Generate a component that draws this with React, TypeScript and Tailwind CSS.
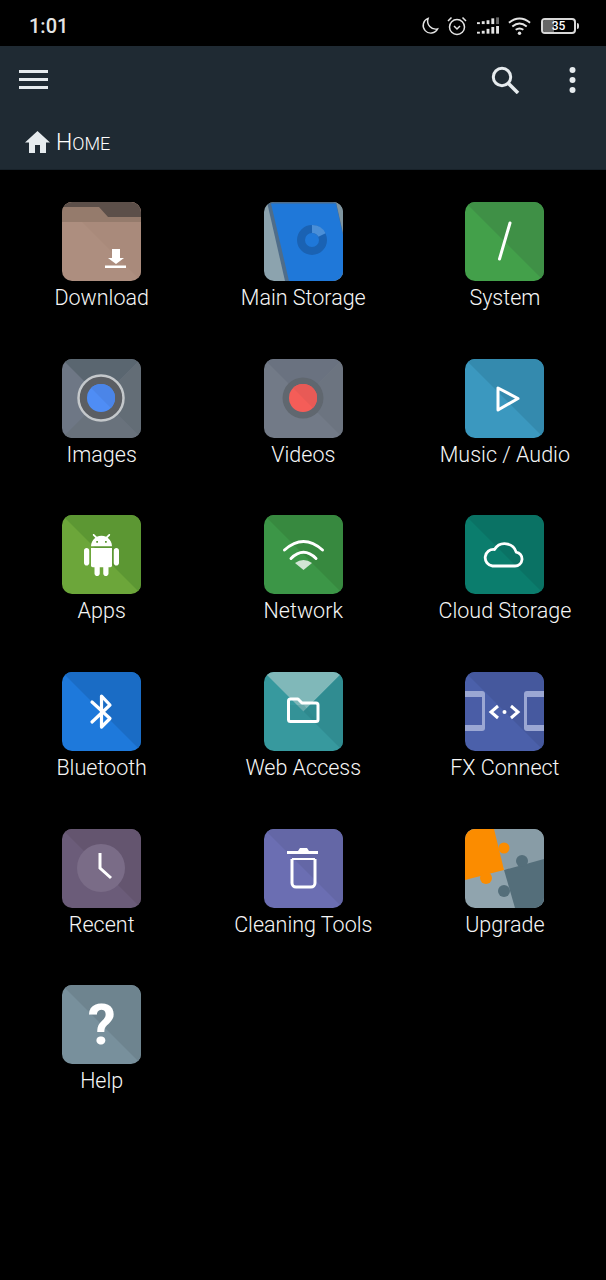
import type { ReactNode } from 'react'

const FONT = "font-['Roboto','Liberation_Sans',sans-serif]"

// tile with the two-tone diagonal; art is drawn on a 79x79 canvas
function Tile({ base, shade, children }: { base: string; shade?: string; children?: ReactNode }) {
  return (
    <svg viewBox="0 0 79 79" className="block w-[79px] h-[79px] rounded-[10px]">
      <rect width="79" height="79" fill={base} />
      {shade && <polygon points="0,0 79,0 79,79" fill={shade} />}
      {children}
    </svg>
  )
}

const QUAD = {
  top: '0,0 79,0 39.5,39.5',
  bottom: '0,79 79,79 39.5,39.5',
  left: '0,0 0,79 39.5,39.5',
  right: '79,0 79,79 39.5,39.5',
}

const DownloadIcon = () => (
  <Tile base="#ad8e7f" shade="#a98a7b">
    <rect width="79" height="15" fill="#5c4f49" />
    <polygon points="0,5 37,5 46,15 79,15 79,20 0,20" fill="#957b6c" />
    <polygon points="50,56 50,47 58,47 58,56 62,56 54,62 46,56" fill="#fff" />
    <rect x="43" y="63.5" width="21" height="2.5" fill="#fff" />
  </Tile>
)

const StorageIcon = () => (
  <Tile base="#8ca3ae">
    <polygon points="40,0 79,0 79,79 50,79" fill="#7f95a0" />
    <polygon points="3,0 72,0 79,31 79,79 21,79" fill="#4f6d8a" />
    <polygon points="7,1.500 72,1.500 79,33 79,79 25,79" fill="#1f78d9" />
    <circle cx="48" cy="38" r="11" fill="none" stroke="#1a62b3" strokeWidth="8" />
    <path d="M48 27a11 11 0 0 1 10 6" fill="none" stroke="#4a8fd8" strokeWidth="8" />
  </Tile>
)

const SystemIcon = () => (
  <Tile base="#43a04a" shade="#3f9046">
    <path d="M45 21L34.500 57" stroke="#fff" strokeWidth="3" strokeLinecap="round" />
  </Tile>
)

const ImagesIcon = () => (
  <Tile base="#6e7785">
    <polygon points={QUAD.top} fill="#5a6670" />
    <polygon points={QUAD.right} fill="#636d76" />
    <polygon points={QUAD.bottom} fill="#69727c" />
    <circle cx="39" cy="39" r="22.500" fill="#5b5e63" stroke="#c4c8cb" strokeWidth="2.500" />
    <circle cx="39" cy="39" r="14" fill="#4f8df5" />
    <path d="M29.100 29.100A14 14 0 0 1 48.900 48.900Z" fill="#4b85e8" />
  </Tile>
)

const VideosIcon = () => (
  <Tile base="#727a87">
    <polygon points={QUAD.top} fill="#6a7280" />
    <polygon points={QUAD.right} fill="#6c7480" />
    <circle cx="39" cy="39" r="20.500" fill="#60676f" />
    <circle cx="39" cy="39" r="14" fill="#f45d58" />
    <path d="M29.100 29.100A14 14 0 0 1 48.900 48.900Z" fill="#e85a56" />
  </Tile>
)

const MusicIcon = () => (
  <Tile base="#3b98bf" shade="#348aae">
    <polygon points="33,29 33,51 53,39.500" fill="none" stroke="#fff" strokeWidth="3" strokeLinejoin="round" />
  </Tile>
)

const AppsIcon = () => (
  <Tile base="#6ca63a" shade="#5c9733">
    <g transform="translate(18.500 19) scale(1.75)">
      <path
        fill="#fff"
        d="M6 18c0 .55.45 1 1 1h1v3.500c0 .83.67 1.500 1.500 1.500s1.500-.67 1.500-1.500V19h2v3.500c0 .83.67 1.500 1.500 1.500s1.500-.67 1.500-1.500V19h1c.55 0 1-.45 1-1V8H6v10zM3.500 8C2.670 8 2 8.670 2 9.500v7c0 .83.67 1.500 1.500 1.500S5 17.330 5 16.500v-7C5 8.670 4.330 8 3.500 8zm17 0c-.83 0-1.500.67-1.500 1.500v7c0 .83.67 1.500 1.500 1.500s1.500-.67 1.500-1.500v-7c0-.83-.67-1.500-1.500-1.500zm-4.970-5.840l1.300-1.300c.2-.2.2-.51 0-.71-.2-.2-.51-.2-.71 0l-1.480 1.480C13.850 1.230 12.950 1 12 1c-.96 0-1.860.23-2.660.63L7.850.15c-.2-.2-.51-.2-.71 0-.2.2-.2.51 0 .71l1.310 1.310C6.970 3.260 6 5.010 6 7h12c0-1.990-.97-3.750-2.470-4.840zM10 5H9V4h1v1zm5 0h-1V4h1v1z"
      />
    </g>
  </Tile>
)

const NetworkIcon = () => (
  <Tile base="#3c9647" shade="#37893f">
    <path d="M20.500 35Q39.500 18 58.500 35" fill="none" stroke="#fff" strokeWidth="3" strokeLinecap="round" />
    <path d="M27 43.500Q39.500 31 52 43.500" fill="none" stroke="#fff" strokeWidth="3" strokeLinecap="round" />
    <path d="M31 48Q39.500 42 48 48L39.500 55Z" fill="#d3e5d5" />
  </Tile>
)

const CloudIcon = () => (
  <Tile base="#0b7d6d" shade="#0a7264">
    <path
      d="M27.500 51H50a7 7 0 0 0 1.200-13.900A12 12 0 0 0 29.500 34.500 8.300 8.300 0 0 0 27.500 51Z"
      fill="none"
      stroke="#fff"
      strokeWidth="2.800"
      strokeLinejoin="round"
    />
  </Tile>
)

const BluetoothIcon = () => (
  <Tile base="#1e79db" shade="#1a6cc5">
    <path
      d="M30 30L48 46.500L39.500 55V24L48 33L30 50"
      fill="none"
      stroke="#fff"
      strokeWidth="3.200"
      strokeLinejoin="round"
      strokeLinecap="round"
    />
  </Tile>
)

const WebIcon = () => (
  <Tile base="#37999e">
    <polygon points={QUAD.top} fill="#80b8b9" />
    <polygon points={QUAD.right} fill="#308c91" />
    <polygon points="26,33 40,33 52,48 26,48" fill="#2f8388" opacity="0.3" />
    <path
      d="M24.500 47.500V29a2 2 0 0 1 2-2H34l4 4H52a2 2 0 0 1 2 2V47.500a2 2 0 0 1-2 2H26.500a2 2 0 0 1-2-2Z"
      fill="none"
      stroke="#fff"
      strokeWidth="3"
      strokeLinejoin="round"
    />
  </Tile>
)

const ConnectIcon = () => (
  <Tile base="#4b60aa" shade="#45589d">
    <path d="M0 19H17A3 3 0 0 1 20 22V56A3 3 0 0 1 17 59H0Z" fill="#9ba7d3" />
    <rect x="0" y="25" width="17" height="28" fill="#4a5da6" />
    <path d="M79 19H62A3 3 0 0 0 59 22V56A3 3 0 0 0 62 59H79Z" fill="#9ba7d3" />
    <rect x="62" y="25" width="17" height="28" fill="#46599f" />
    <path d="M33 34L26 40L33 46M46 34L53 40L46 46" fill="none" stroke="#fff" strokeWidth="3" />
    <circle cx="39.500" cy="40" r="2" fill="#fff" />
  </Tile>
)

const RecentIcon = () => (
  <Tile base="#6b5c79" shade="#64556f">
    <circle cx="39" cy="39" r="24" fill="#7a6c87" />
    <path d="M38 24V39L49 49" fill="none" stroke="#fff" strokeWidth="3" />
  </Tile>
)

const TrashIcon = () => (
  <Tile base="#6b6eb2" shade="#6467a6">
    <path d="M23 23.500H54" stroke="#fff" strokeWidth="3" />
    <path d="M34 22L36 19H43L45 22Z" fill="#fff" />
    <path d="M28 30V54A4 4 0 0 0 32 58H47A4 4 0 0 0 51 54V30" fill="none" stroke="#fff" strokeWidth="3" />
    <path d="M28 30H51" stroke="#fff" strokeWidth="2" />
  </Tile>
)

const UpgradeIcon = () => (
  <Tile base="#90a4ae" shade="#889ca6">
    <polygon points="39,41 79,30 79,79 50,79" fill="#546e7a" />
    <circle cx="57" cy="32" r="6" fill="#546e7a" />
    <circle cx="39" cy="62" r="6" fill="#546e7a" />
    <polygon points="0,0 29,0 39,41 0,51" fill="#fb8c00" />
    <circle cx="39" cy="19" r="5.500" fill="#fb8c00" />
    <circle cx="21" cy="49" r="6" fill="#fb8c00" />
  </Tile>
)

const HelpIcon = () => (
  <div className="relative">
    <Tile base="#78909c" shade="#6e848f" />
    <span className="absolute inset-0 flex items-center justify-center text-[56px] leading-none font-bold text-white">?</span>
  </div>
)

const ITEMS: { label: string; icon: ReactNode }[] = [
  { label: 'Download', icon: <DownloadIcon /> },
  { label: 'Main Storage', icon: <StorageIcon /> },
  { label: 'System', icon: <SystemIcon /> },
  { label: 'Images', icon: <ImagesIcon /> },
  { label: 'Videos', icon: <VideosIcon /> },
  { label: 'Music / Audio', icon: <MusicIcon /> },
  { label: 'Apps', icon: <AppsIcon /> },
  { label: 'Network', icon: <NetworkIcon /> },
  { label: 'Cloud Storage', icon: <CloudIcon /> },
  { label: 'Bluetooth', icon: <BluetoothIcon /> },
  { label: 'Web Access', icon: <WebIcon /> },
  { label: 'FX Connect', icon: <ConnectIcon /> },
  { label: 'Recent', icon: <RecentIcon /> },
  { label: 'Cleaning Tools', icon: <TrashIcon /> },
  { label: 'Upgrade', icon: <UpgradeIcon /> },
  { label: 'Help', icon: <HelpIcon /> },
]

function StatusBar() {
  return (
    <div className="h-[46px] flex items-center justify-between pl-[29px] pr-[27px] pt-[5px] bg-black text-[#e4e4e4]">
      <span className="text-[20px] font-medium leading-none">1:01</span>
      <div className="flex items-center">
        <svg width="18" height="18" viewBox="0 0 19 19" fill="none" stroke="currentColor" strokeWidth="1.500">
          <path d="M7.500 1.500A8 8 0 1 0 17.500 12.500 8.500 8.500 0 0 1 7.500 1.500Z" />
        </svg>
        <svg width="20" height="20" viewBox="0 0 20 20" fill="none" stroke="currentColor" strokeWidth="1.500" className="ml-[8px]">
          <circle cx="10" cy="11" r="7.500" />
          <path d="M1 5L4.500 1.500M19 5L15.500 1.500M7 10L10 13L13 10" />
        </svg>
        <svg width="22" height="18" viewBox="0 0 23 18" fill="currentColor" className="ml-[10px]">
          <rect x="0" y="5" width="3" height="2" />
          <rect x="5" y="4" width="3" height="3" />
          <rect x="10" y="3" width="3" height="4" />
          <rect x="15" y="1" width="3" height="6" />
          <rect x="20" y="0" width="3" height="7" opacity="0.45" />
          <rect x="0" y="15" width="3" height="2" />
          <rect x="5" y="14" width="3" height="3" />
          <rect x="10" y="12" width="3" height="5" />
          <rect x="15" y="10" width="3" height="7" />
          <rect x="20" y="9" width="3" height="8" />
        </svg>
        <svg width="24" height="20" viewBox="0 0 25 20" fill="none" stroke="currentColor" strokeWidth="2" className="ml-[9px]">
          <path d="M1 6.500Q12 -2 23 6.500M4.500 10.500Q12 4.500 19.500 10.500M8 14Q12 11 16 14" />
          <circle cx="12" cy="17.500" r="1.800" fill="currentColor" stroke="none" />
        </svg>
        <div className="ml-[9px] flex items-center">
          <div className="relative w-[35px] h-[16px] rounded-[4px] border-2 border-[#d8d8d8] overflow-hidden flex items-center justify-center">
            <div className="absolute left-0 top-0 bottom-0 w-[11px] bg-[#666]" />
            <span className="relative text-[12px] leading-none font-medium text-white">35</span>
          </div>
          <div className="w-[2px] h-[6px] ml-[1px] bg-[#d8d8d8] rounded-r-sm" />
        </div>
      </div>
    </div>
  )
}

function Toolbar() {
  return (
    <div className="bg-[#1f2a33] border-b border-[#18222a] h-[124px] text-[#e6ebee]">
      <div className="h-[67px] flex items-center pl-[19px] pr-[30px]">
        <svg width="29" height="19" viewBox="0 0 29 19" fill="currentColor">
          <rect width="29" height="3" />
          <rect y="8" width="29" height="3" />
          <rect y="16" width="29" height="3" />
        </svg>
        <svg width="29" height="28" viewBox="0 0 29 28" fill="none" stroke="currentColor" className="ml-auto">
          <circle cx="11" cy="11" r="8.700" strokeWidth="3" />
          <path d="M17.500 17.500L27 27" strokeWidth="3.500" />
        </svg>
        <svg width="7" height="26" viewBox="0 0 7 26" fill="currentColor" className="ml-[49px]">
          <circle cx="3.500" cy="3" r="3" />
          <circle cx="3.500" cy="13" r="3" />
          <circle cx="3.500" cy="23" r="3" />
        </svg>
      </div>
      <div className="h-[56px] flex items-center pl-[25px] pt-[2px]">
        <svg width="25" height="22" viewBox="0 0 25 22" fill="currentColor">
          <path d="M12.500 0L25 11.500H21V22H15V14H10V22H4V11.500H0Z" />
        </svg>
        <span className="ml-[6px] font-light leading-none text-white">
          <span className="text-[23px]">H</span>
          <span className="text-[18px]">OME</span>
        </span>
      </div>
    </div>
  )
}

export default function App() {
  return (
    <div className={`${FONT} w-[606px] h-[1280px] bg-black overflow-hidden`}>
      <StatusBar />
      <Toolbar />
      <div className="grid grid-cols-[repeat(3,201.6px)] auto-rows-[156.670px] pt-[32px] pl-[0.9px]">
        {ITEMS.map((item) => (
          <div key={item.label} className="flex flex-col items-center">
            {item.icon}
            <span className="mt-[3px] text-[21.500px] leading-[28px] font-light text-[#f6f6f6] whitespace-nowrap">{item.label}</span>
          </div>
        ))}
      </div>
    </div>
  )
}
